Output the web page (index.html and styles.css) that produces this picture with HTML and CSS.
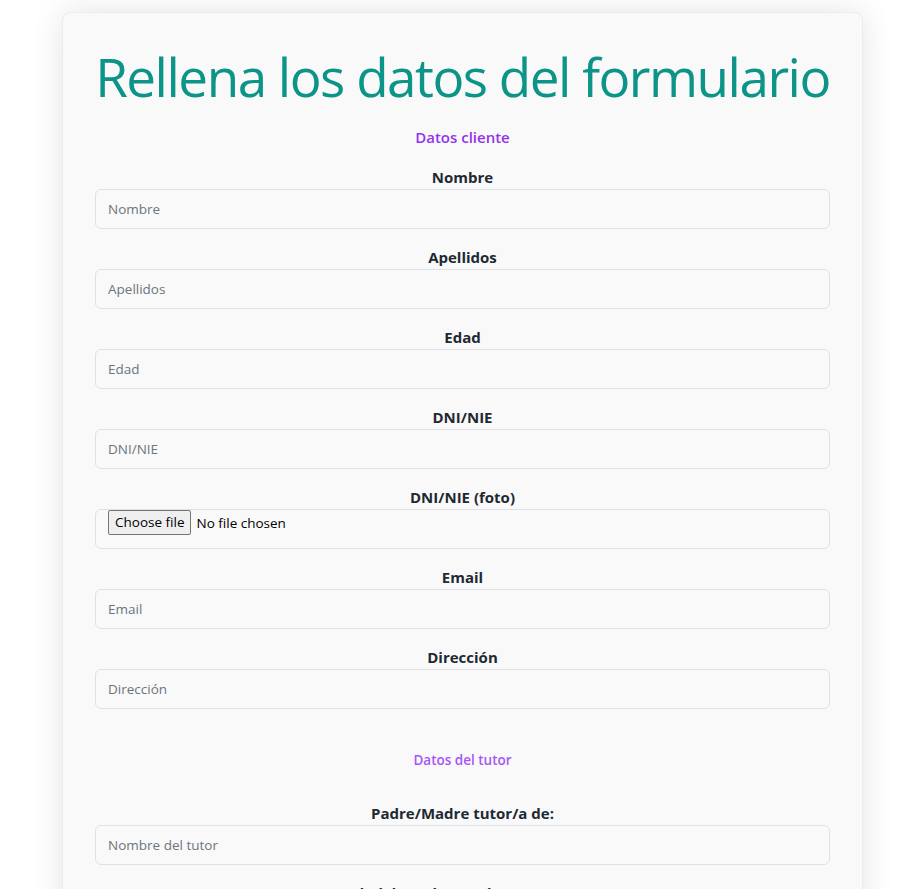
FILE: index.html
```html
<!DOCTYPE html>
<html lang="es">
<head>
<meta charset="utf-8">
<title>Formulario</title>
<link rel="stylesheet" href="styles.css">
</head>
<body>
<main class="card">
  <h1 class="title">Rellena los datos del formulario</h1>
  <form class="form">
    <h5 class="section section-client">Datos cliente</h5>
    <div class="field">
      <label class="label" for="nombre">Nombre</label>
      <input class="control" id="nombre" type="text" placeholder="Nombre">
    </div>
    <div class="field">
      <label class="label" for="apellidos">Apellidos</label>
      <input class="control" id="apellidos" type="text" placeholder="Apellidos">
    </div>
    <div class="field">
      <label class="label" for="edad">Edad</label>
      <input class="control" id="edad" type="text" placeholder="Edad">
    </div>
    <div class="field">
      <label class="label" for="dni">DNI/NIE</label>
      <input class="control" id="dni" type="text" placeholder="DNI/NIE">
    </div>
    <div class="field">
      <label class="label" for="foto">DNI/NIE (foto)</label>
      <div class="control file-control">
        <button type="button" class="file-btn" id="foto">Choose file</button>
        <span class="file-name">No file chosen</span>
      </div>
    </div>
    <div class="field">
      <label class="label" for="email">Email</label>
      <input class="control" id="email" type="text" placeholder="Email">
    </div>
    <div class="field">
      <label class="label" for="direccion">Dirección</label>
      <input class="control" id="direccion" type="text" placeholder="Dirección">
    </div>
    <h6 class="section section-tutor">Datos del tutor</h6>
    <div class="field">
      <label class="label" for="tutor">Padre/Madre tutor/a de:</label>
      <input class="control" id="tutor" type="text" placeholder="Nombre del tutor">
    </div>
    <div class="field">
      <label class="label" for="edadtutor">Edad de Padre/Madre o tutor/a</label>
      <input class="control" id="edadtutor" type="text" placeholder="Edad del tutor">
    </div>
  </form>
</main>
</body>
</html>
```

FILE: styles.css
```css
html, body {
  margin: 0;
  padding: 0;
  background: #ffffff;
}

body {
  font-family: "Open Sans", "Noto Sans", sans-serif;
  color: #212529;
  padding: 12px 0 40px 62px;
}

.card {
  width: 801px;
  box-sizing: border-box;
  background: #f9f9f9;
  border: 1px solid #ececec;
  border-radius: 8px;
  box-shadow: 0 0 32px rgba(0, 0, 0, 0.11);
  padding: 28px 32px 32px;
}

.title {
  margin: 0;
  text-align: center;
  white-space: nowrap;
  font-weight: 500;
  font-size: 53px;
  letter-spacing: -1.5px;
  line-height: 72px;
  color: #0d9488;
}

.form {
  display: flex;
  flex-direction: column;
}

.section {
  margin: 0;
  text-align: center;
}

.section-client {
  font-size: 15px;
  font-weight: 600;
  line-height: 22px;
  color: #9333ea;
  margin: 13px 0 17px;
}

.section-tutor {
  font-size: 13.5px;
  font-weight: 600;
  line-height: 22px;
  color: #a855f7;
  margin: 24px 0 30px;
}

.field {
  display: flex;
  flex-direction: column;
  margin-bottom: 16px;
}

.label {
  text-align: center;
  font-weight: 700;
  font-size: 15px;
  line-height: 24px;
  color: #1f2933;
}

.control {
  box-sizing: border-box;
  height: 40px;
  width: 100%;
  border: 1px solid #dee2e6;
  border-radius: 6px;
  background: #f9f9f9;
  padding: 0 12px;
  font-family: inherit;
  font-size: 13.5px;
  color: #212529;
}

.control::placeholder {
  color: #6c757d;
}

.file-control {
  display: flex;
  align-items: flex-start;
  gap: 5px;
}

.file-btn {
  font-family: inherit;
  font-size: 13.5px;
  line-height: 21px;
  height: 25px;
  padding: 0 6px;
  margin: 0;
  background: #efefef;
  border: 1px solid #767676;
  border-radius: 2px;
  color: #000;
}

.file-name {
  font-size: 13.5px;
  line-height: 27px;
  color: #000;
}
```
